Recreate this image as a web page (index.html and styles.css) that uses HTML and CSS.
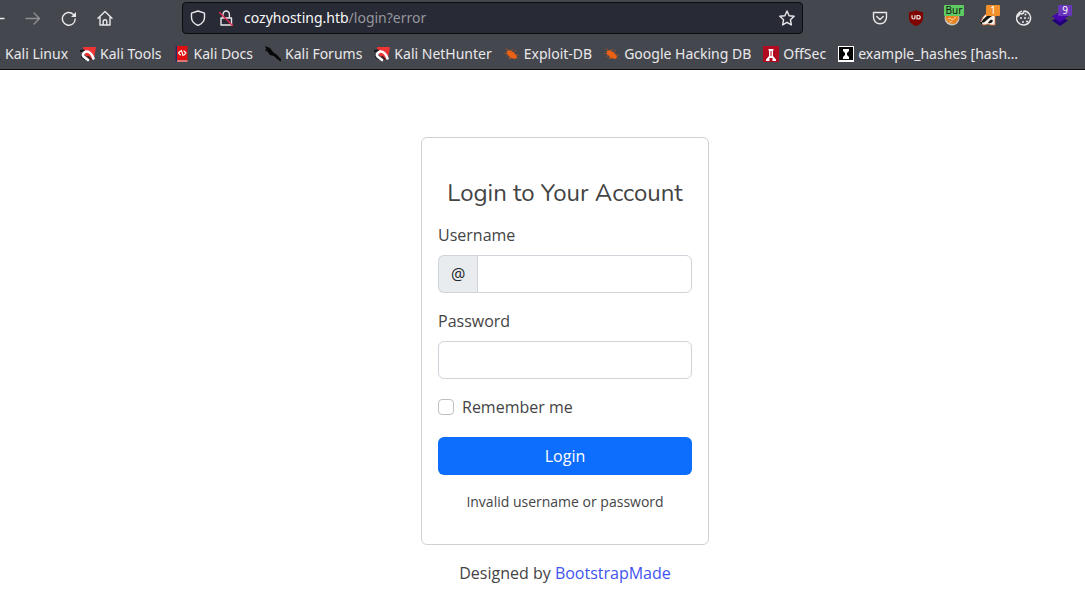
FILE: index.html
```html
<!DOCTYPE html>
<html lang="en">
<head>
<meta charset="utf-8">
<meta name="viewport" content="width=device-width, initial-scale=1">
<title>Login</title>
<link rel="stylesheet" href="styles.css">
</head>
<body>
<header class="browser">
  <div class="toolbar">
    <div class="nav-buttons">
      <button class="tool" aria-label="Back"><svg class="icon" viewBox="0 0 16 16"><path d="M15 8.500H1M7 2 1 8.500 7 15"/></svg></button>
      <button class="tool tool-disabled" aria-label="Forward"><svg class="icon" viewBox="0 0 16 16"><path d="M1 8.500h13.500M9 3l5.500 5.500L9 14"/></svg></button>
      <button class="tool" aria-label="Reload"><svg class="icon" viewBox="0 0 16 16"><path d="M14.200 9a6.400 6.400 0 1 1-2-4.800l1 1"/><path class="solid" d="M15 2v5h-5z"/></svg></button>
      <button class="tool" aria-label="Home"><svg class="icon" viewBox="0 0 16 16"><path d="M1 8.300 8 1.500l7 6.800M3 7v8h10V7M6.200 15v-3.500a1.800 1.800 0 0 1 3.600 0V15"/></svg></button>
    </div>
    <div class="address">
      <svg class="icon" viewBox="0 0 16 16"><path d="M8 1 14.500 3.200v4.300c0 3.500-3 6.500-6.500 8-3.500-1.500-6.500-4.500-6.500-8V3.200z"/></svg>
      <svg class="icon" viewBox="0 0 16 16"><path d="M5 8V4.200a3.200 3.200 0 0 1 6.400 0V8M3 8h10.500v7H3z"/><path class="strike" d="M1.500 2.500l13 13"/></svg>
      <a class="url" href="#"><span class="host">cozyhosting.htb</span>/login?error</a>
      <button class="tool" aria-label="Bookmark this page"><svg class="icon" viewBox="0 0 16 16"><path d="m8 1 2.100 4.700 5.100.500-3.800 3.500 1 5.200L8 12.300 3.600 14.900l1-5.200L.800 6.200l5.100-.500z"/></svg></button>
    </div>
    <div class="extensions">
      <button class="tool" aria-label="Pocket"><svg class="icon" viewBox="0 0 16 16"><path d="M1.500 2.500h13v4.800a6.500 6.500 0 0 1-13 0zM4.800 6.500 8 9.500l3.200-3"/></svg></button>
      <button class="tool" aria-label="uBlock Origin"><svg class="icon" viewBox="0 0 16 16"><path fill="#800000" stroke="none" d="M8 0c2 1.500 4.500 2 7 2v6c0 4-3 6.500-7 8-4-1.500-7-4-7-8V2c2.500 0 5-.500 7-2z"/><path class="fine" d="M4 5.500v2.300c0 1.600 3 1.600 3 0V5.500M9 5.500v3.500h1c3 0 3-3.500 0-3.500z"/></svg></button>
      <button class="tool" aria-label="FoxyProxy"><svg class="icon" viewBox="0 0 16 16"><circle cx="8" cy="8" r="7.500" fill="#c7c5bd" stroke="none"/><path fill="#e98320" stroke="none" d="M2 4h12l.500 5-3 4.500L8 14l-4-1.500L1.500 9z"/><path stroke="#fbd29c" stroke-width="1" d="M4 9l2-1 2 2 4-3M5 12l3-.500"/></svg><span class="badge badge-green">Bur</span></button>
      <button class="tool" aria-label="Privacy Badger"><svg class="icon" viewBox="0 0 16 16"><path fill="#f8f4ec" stroke="#d8743a" stroke-width=".8" d="M.500 12.500 3 7l5-5 7 4v9h-4l-3-1-4 1z"/><path fill="#161616" stroke="none" d="M1 12.500 3.500 9 8 5l4 1-4 3-4 3.500zM8 12.500l3-3 2 1-1 2-3 1zM0 12l2 0v2H1z"/></svg><span class="badge badge-orange">1</span></button>
      <button class="tool" aria-label="Cookie Editor"><svg class="icon" viewBox="0 0 16 16"><path d="M5.500 1.300A7 7 0 1 0 8 1l-.500 2-2 1-2-.500L3 5.500 1 7"/><g class="solid"><circle cx="9.500" cy="4.500" r="1"/><circle cx="5" cy="8" r="1"/><circle cx="9" cy="8" r="1"/><circle cx="12.500" cy="8" r=".8"/><circle cx="7" cy="12" r="1"/><circle cx="11" cy="11.500" r="1"/></g></svg></button>
      <button class="tool" aria-label="Wappalyzer"><svg class="icon" viewBox="0 0 16 16"><path fill="#22007a" stroke="none" d="m0 10.500 8-4 8 4-8 5.500z"/><path fill="#4608ad" stroke="none" d="m0 6.500 8-5 8 5-8 5.500z"/></svg><span class="badge badge-purple">9</span></button>
    </div>
  </div>
  <nav class="bookmarks" aria-label="Bookmarks">
    <a class="bookmark" href="#"><svg class="icon" viewBox="0 0 16 16"><path fill="#111" stroke="none" d="M9 7l4 3 3 4-5-3z"/></svg>Kali Linux</a>
    <a class="bookmark" href="#"><svg class="icon" viewBox="0 0 16 16"><path fill="#f03434" stroke="none" d="M3 1h13l-2 11-3 2L4 8z"/><path stroke="#18181a" stroke-width="2" d="M.800 5 4 4.500M2 11l3 2"/><path stroke="#fff" stroke-width="2.600" d="M13.500 12.500C12 8 9 5 6 5.500c-2.500 1-4 3-2.500 5L8 14"/><path stroke="#18181a" stroke-width="1.400" d="M11 13 8 10.500"/></svg>Kali Tools</a>
    <a class="bookmark" href="#"><svg class="icon" viewBox="0 0 16 16"><path fill="#e01010" stroke="none" d="M1.500 0h12v16h-12z"/><path fill="#17336d" stroke="none" d="M1.500 0H3v16H1.500z"/><path fill="#ddd" stroke="none" d="M3 14.500h10.500v1H3z"/><path stroke="#fff" stroke-width="1.100" d="M6.500 5 4.500 7l2 2M10 5l2 2-2 2M9 9.500 7.500 4.500"/></svg>Kali Docs</a>
    <a class="bookmark" href="#"><svg class="icon" viewBox="0 0 16 16"><path fill="#070707" stroke="none" d="M0 0l5 2 3 4 4 3 1 2 3 2v2l-4-2-3-3-4-1-3-4z"/><path stroke="#070707" stroke-width="1" d="M0 4l4 1M13 10l2 5"/></svg>Kali Forums</a>
    <a class="bookmark" href="#"><svg class="icon" viewBox="0 0 16 16"><path fill="#f03434" stroke="none" d="M3 1h13l-2 11-3 2L4 8z"/><path stroke="#18181a" stroke-width="2" d="M.800 5 4 4.500M2 11l3 2"/><path stroke="#fff" stroke-width="2.600" d="M13.500 12.500C12 8 9 5 6 5.500c-2.500 1-4 3-2.500 5L8 14"/><path stroke="#18181a" stroke-width="1.400" d="M11 13 8 10.500"/></svg>Kali NetHunter</a>
    <a class="bookmark" href="#"><svg class="icon" viewBox="0 0 16 16"><path fill="#ed6114" stroke="none" d="M2.500 5 6 4.500l4 2 3 4-1.500 2.500L7 12 3.500 8.500z"/><path stroke="#ed6114" stroke-width=".5" d="M2 3l4 2 3-1.500M1 7.500h3l-1 3M6 10.500l-1 2h2M10 6.500l1.500-2M12 9h2.500M12 11.500l2 .500"/></svg>Exploit-DB</a>
    <a class="bookmark" href="#"><svg class="icon" viewBox="0 0 16 16"><path fill="#ed6114" stroke="none" d="M2.500 5 6 4.500l4 2 3 4-1.500 2.500L7 12 3.500 8.500z"/><path stroke="#ed6114" stroke-width=".5" d="M2 3l4 2 3-1.500M1 7.500h3l-1 3M6 10.500l-1 2h2M10 6.500l1.500-2M12 9h2.500M12 11.500l2 .500"/></svg>Google Hacking DB</a>
    <a class="bookmark" href="#"><svg class="icon" viewBox="0 0 16 16"><path fill="#b10b20" stroke="none" d="M0 0h16v16H0z"/><path fill="#fff" stroke="none" d="M5.500 3h5v1.500H10V10l3 3.500V15H9.500v-3h-3v3H3v-1.500L6 10V4.500h-.500z"/><path fill="#b10b20" stroke="none" d="M7.500 5h1v5h-1z"/></svg>OffSec</a>
    <a class="bookmark" href="#"><svg class="icon" viewBox="0 0 16 16"><path fill="#fff" stroke="none" d="M0 0h16v16H0z"/><path fill="#050505" stroke="none" d="M1 1h14v13H1z"/><path fill="#fff" stroke="none" d="M5 3h6v2L9 7v2l2 2v2H5v-2l2-2V7L5 5z"/></svg>example_hashes [hash…</a>
  </nav>
</header>
<main class="page">
  <form class="card">
    <h1 class="title">Login to Your Account</h1>
    <div class="field">
      <label for="username">Username</label>
      <div class="input-group"><span class="prefix">@</span><input class="control" id="username" type="text"></div>
    </div>
    <div class="field">
      <label for="password">Password</label>
      <div class="input-group"><input class="control" id="password" type="password"></div>
    </div>
    <div class="remember"><input class="check" id="remember" type="checkbox"><label for="remember">Remember me</label></div>
    <button class="submit" type="submit">Login</button>
    <p class="message">Invalid username or password</p>
  </form>
  <p class="credits">Designed by <a href="#">BootstrapMade</a></p>
</main>
</body>
</html>
```
FILE: styles.css
```css
* { box-sizing: border-box; }
body {
  margin: 0;
  background: #fff;
  color: #444;
  font: 16px/24px "Open Sans", sans-serif;
}
a { text-decoration: none; }

.browser {
  background: #45474f;
  border-bottom: 1px solid #0c0c0d;
  color: #e9e9ea;
  font: 14px/20px "Noto Sans", sans-serif;
  overflow: hidden;
}
.toolbar {
  display: flex;
  align-items: center;
  padding: 2px 17px 4px 0;
}
.nav-buttons {
  display: flex;
  gap: 20px;
  flex: none;
  width: 193px;
  margin-left: -11px;
}
.tool {
  position: relative;
  display: flex;
  padding: 0;
  border: 0;
  background: none;
  color: inherit;
  font-family: inherit;
}
.tool-disabled { opacity: .45; }
.icon {
  flex: none;
  width: 16px;
  height: 16px;
  fill: none;
  stroke: #e9e9ea;
  stroke-width: 1.4;
  stroke-linecap: round;
  stroke-linejoin: round;
}
.icon .solid { fill: #e9e9ea; stroke: none; }
.icon .fine { stroke-width: 1.2; }
.icon .strike { stroke: #e22850; }
.address {
  display: flex;
  flex: 1;
  align-items: center;
  gap: 12px;
  height: 32px;
  padding: 0 7px;
  border: 1px solid #0c0c0d;
  border-radius: 4px;
  background: #282a36;
}
.url { flex: 1; margin-left: -2px; color: #96979c; }
.host { color: #f8f8f8; }
.extensions {
  display: flex;
  gap: 20px;
  flex: none;
  margin-left: 69px;
}
.badge {
  position: absolute;
  top: -5px;
  right: -4px;
  width: 14px;
  height: 11px;
  border-radius: 1px;
  color: #fff;
  font-size: 10px;
  line-height: 11px;
  text-align: center;
}
.badge-green { width: 20px; background: #5ecb62; color: #111; }
.badge-orange { background: #f1902a; }
.badge-purple { background: #6836b8; }
.bookmarks {
  display: flex;
  gap: 12px;
  margin-left: -15px;
  padding: 6px 0 5px;
}
.bookmark {
  display: flex;
  align-items: center;
  gap: 4px;
  color: inherit;
  white-space: nowrap;
}

.page {
  display: flex;
  flex-direction: column;
  align-items: center;
  gap: 16px;
  padding: 67px 0 16px 45px;
}
.card {
  display: flex;
  flex-direction: column;
  gap: 16px;
  width: 100%;
  max-width: 288px;
  padding: 40px 16px 31px;
  border: 1px solid #d0d1d3;
  border-radius: 6px;
}
.title {
  margin: 0 0 -1px;
  font: 400 24px/30px Nunito, Lato, sans-serif;
  text-align: center;
}
.field { display: flex; flex-direction: column; gap: 8px; }
.input-group { display: flex; height: 38px; }
.prefix {
  display: flex;
  align-items: center;
  padding: 0 12px;
  border: 1px solid #ced4da;
  border-right: 0;
  border-radius: 6px 0 0 6px;
  background: #e9ecef;
  color: #212529;
  font-size: 16px;
}
.control {
  flex: 1;
  min-width: 0;
  padding: 6px 12px;
  border: 1px solid #ced4da;
  border-radius: 6px;
  background: #fff;
  font: inherit;
}
.prefix + .control { border-radius: 0 6px 6px 0; }
.remember { display: flex; align-items: center; gap: 8px; }
.check {
  appearance: none;
  width: 16px;
  height: 16px;
  margin: 0;
  border: 1px solid #bfbfbf;
  border-radius: 4px;
  background: #fff;
}
.check:checked { background: #0d6efd; }
.submit {
  margin-top: 2px;
  padding: 7px 12px;
  border: 0;
  border-radius: 6px;
  background: #0d6efd;
  color: #fff;
  font: inherit;
}
.message { margin: 0; font-size: 14px; line-height: 22px; text-align: center; }
.credits { margin: 0; }
.credits a { color: #4154f1; }
```
